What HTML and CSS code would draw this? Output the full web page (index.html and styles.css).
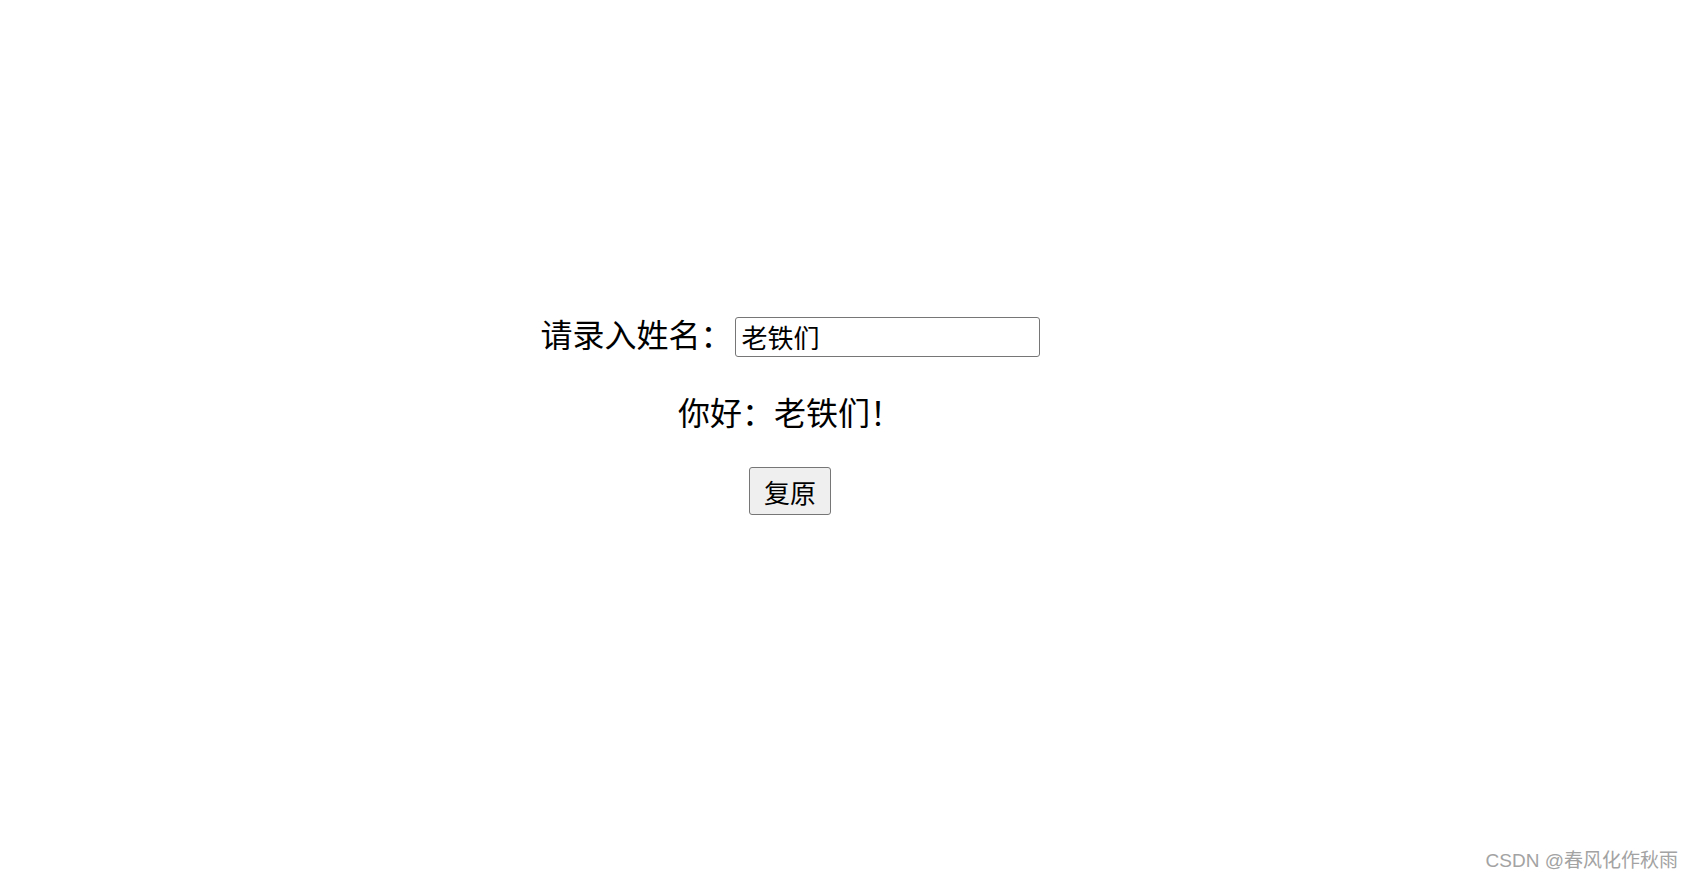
FILE: index.html
```html
<!DOCTYPE html>
<html lang="zh-CN">
<head>
<meta charset="utf-8">
<title>Demo</title>
<link rel="stylesheet" href="styles.css">
</head>
<body>
<div class="app">
  <div class="row-input">
    <label class="label" for="name">请录入姓名：</label>
    <input id="name" class="name-input" type="text" value="老铁们">
  </div>
  <p class="greeting">你好：老铁们！</p>
  <button class="reset-btn" type="button">复原</button>
</div>
<div class="watermark">CSDN @春风化作秋雨</div>
</body>
</html>
```
FILE: styles.css
```css
html, body {
  margin: 0;
  padding: 0;
  background: #ffffff;
}
body {
  font-family: "Liberation Sans", "Noto Sans CJK SC", sans-serif;
  color: #000;
  width: 1692px;
  height: 878px;
  overflow: hidden;
  position: relative;
}
.app {
  width: 1580px;
  display: flex;
  flex-direction: column;
  align-items: center;
  padding-top: 317px;
}
.row-input {
  display: flex;
  align-items: center;
  gap: 2px;
}
.label {
  font-family: "Noto Sans CJK SC", sans-serif;
  font-size: 32px;
  line-height: 33px;
  margin-bottom: 7px;
}
.name-input {
  box-sizing: border-box;
  width: 305px;
  height: 40px;
  margin: 0;
  padding: 0 6px 2px 6px;
  border: 1px solid #767676;
  border-radius: 3px;
  font-family: "Noto Sans CJK SC", sans-serif;
  font-size: 26px;
  color: #000;
  background: #fff;
  outline: none;
}
.greeting {
  margin: 39px 0 0 0;
  font-family: "Noto Sans CJK SC", sans-serif;
  font-size: 32px;
  line-height: 30px;
  height: 30px;
}
.reset-btn {
  box-sizing: border-box;
  margin-top: 41px;
  height: 48px;
  padding: 0 14px;
  border: 1px solid #767676;
  border-radius: 3px;
  background: #efefef;
  font-family: "Noto Sans CJK SC", sans-serif;
  font-size: 26px;
  color: #000;
}
.watermark {
  position: absolute;
  right: 14px;
  bottom: 6px;
  font-family: "Liberation Sans", "Noto Sans CJK SC", sans-serif;
  font-size: 19px;
  line-height: 22px;
  color: #a3a3a3;
}
```
